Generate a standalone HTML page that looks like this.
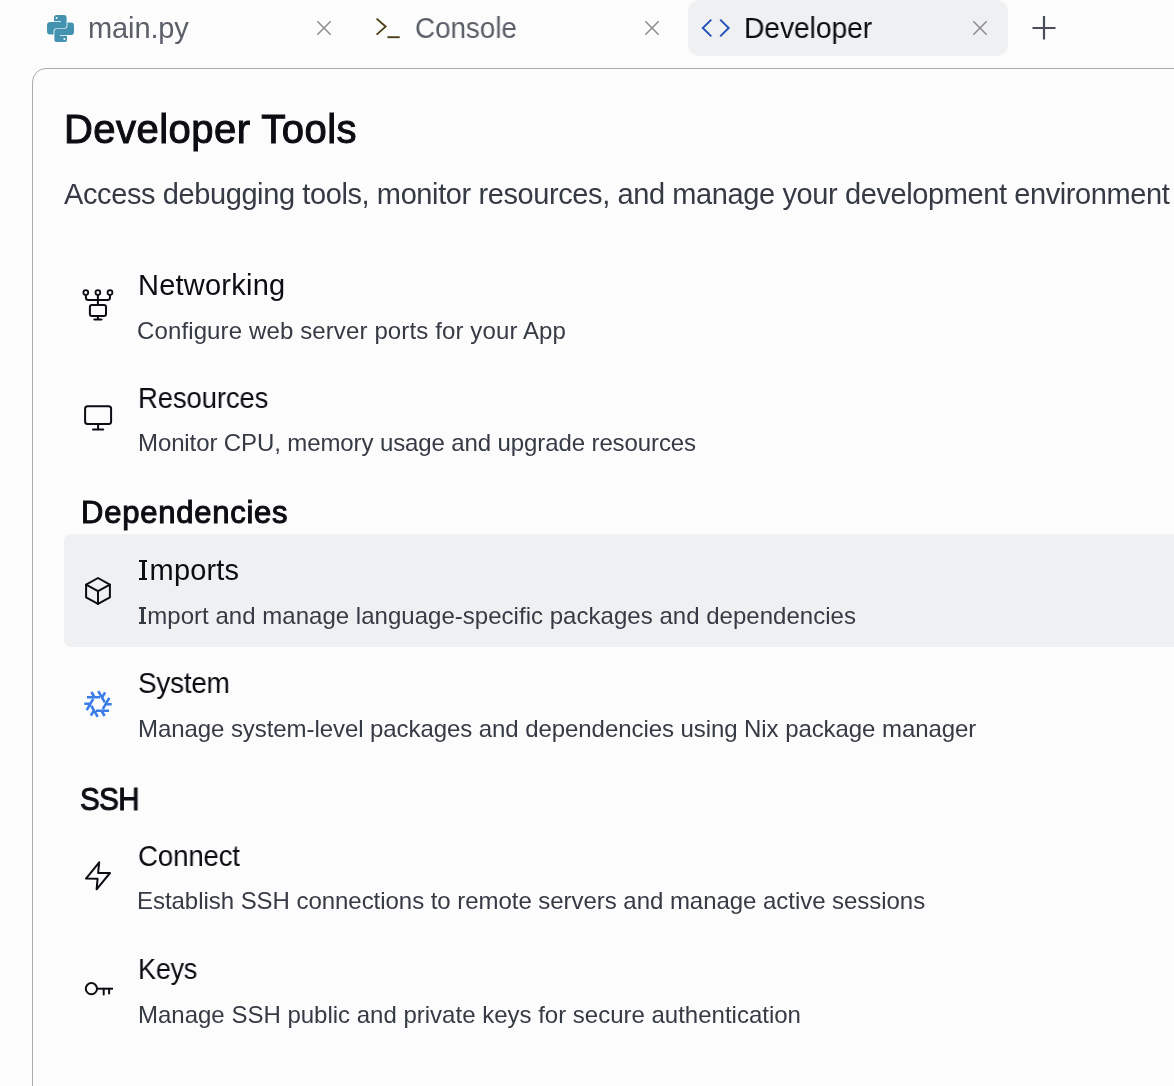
<!DOCTYPE html>
<html><head><meta charset="utf-8"><style>
html,body{margin:0;padding:0;}
body{width:1174px;height:1086px;overflow:hidden;position:relative;background:#fcfcfc;font-family:"Liberation Sans", sans-serif;}
.t{position:absolute;white-space:nowrap;will-change:transform;}
</style></head><body>
<div style="position:absolute;left:688px;top:0px;width:320px;height:56px;background:#eff0f2;border-radius:12px"></div>
<svg style="position:absolute;left:47px;top:15px" width="27" height="27" viewBox="0 0 27 27"><path d="M7,2.6 Q7,0 9.6,0 L17,0 Q19.6,0 19.6,2.6 L19.6,10.6 Q19.6,13.3 16.9,13.3 L9.6,13.3 Q6.6,13.3 6.6,16.3 L6.6,19.6 L3,19.6 Q0,19.6 0,16.3 L0,10.3 Q0,6.9 3.4,6.9 L14,6.9 L14,6.2 L7,6.2 Z" fill="#4393b0"/><path d="M7,2.6 Q7,0 9.6,0 L17,0 Q19.6,0 19.6,2.6 L19.6,10.6 Q19.6,13.3 16.9,13.3 L9.6,13.3 Q6.6,13.3 6.6,16.3 L6.6,19.6 L3,19.6 Q0,19.6 0,16.3 L0,10.3 Q0,6.9 3.4,6.9 L14,6.9 L14,6.2 L7,6.2 Z" fill="#4393b0" transform="rotate(180 13.5 13.5)"/><circle cx="9.6" cy="2.9" r="1" fill="#fcfcfc"/><circle cx="17.4" cy="24.1" r="1" fill="#fcfcfc"/></svg>
<svg style="position:absolute;left:314px;top:18px" width="20" height="20" viewBox="0 0 20 20"><path d="M3.3 3.3 L16.7 16.7 M16.7 3.3 L3.3 16.7" stroke="#8c8c8e" stroke-width="1.5" fill="none"/></svg>
<svg style="position:absolute;left:370px;top:10px" width="36" height="36" viewBox="0 0 36 36"><path d="M6.6 8.6 L15.6 16.6 L6.6 24.6" stroke="#4b3f16" stroke-width="1.9" fill="none"/><path d="M17.4 27.2 L29.7 27.2" stroke="#4b3f16" stroke-width="1.9" fill="none"/></svg>
<svg style="position:absolute;left:642px;top:18px" width="20" height="20" viewBox="0 0 20 20"><path d="M3.3 3.3 L16.7 16.7 M16.7 3.3 L3.3 16.7" stroke="#8c8c8e" stroke-width="1.5" fill="none"/></svg>
<svg style="position:absolute;left:690px;top:10px" width="50" height="36" viewBox="0 0 50 36"><path d="M21.3 9.6 L12.8 18 L21.3 26.4 M30.2 9.6 L38.7 18 L30.2 26.4" stroke="#1f4fb6" stroke-width="1.9" fill="none"/></svg>
<svg style="position:absolute;left:970px;top:18px" width="20" height="20" viewBox="0 0 20 20"><path d="M3.3 3.3 L16.7 16.7 M16.7 3.3 L3.3 16.7" stroke="#8c8c8e" stroke-width="1.5" fill="none"/></svg>
<svg style="position:absolute;left:1030px;top:14px" width="28" height="28" viewBox="0 0 28 28"><path d="M14 2 L14 25.5 M2.5 14 L25.5 14" stroke="#4a4e57" stroke-width="2.2" fill="none"/></svg>
<div style="position:absolute;left:32px;top:68px;width:1300px;height:1200px;border:1px solid #a9abae;border-radius:14px;background:#fcfcfc"></div>
<div style="position:absolute;left:64px;top:534px;width:1200px;height:113px;background:#eff0f2;border-radius:8px"></div>
<svg style="position:absolute;left:0;top:0" width="1174" height="1086" viewBox="0 0 1174 1086">
<g fill="none" stroke="#0b0d12" stroke-width="2" stroke-linejoin="round" stroke-linecap="round">
 <circle cx="85.8" cy="292.6" r="2.4" stroke-width="1.8"/><circle cx="97.9" cy="292.6" r="2.4" stroke-width="1.8"/><circle cx="110" cy="292.6" r="2.4" stroke-width="1.8"/>
 <path d="M85.9 295.2 L85.9 297.6 Q85.9 300.1 88.4 300.1 L107.5 300.1 Q110 300.1 110 297.6 L110 295.2"/>
 <path d="M97.9 295.2 L97.9 304.9"/>
 <rect x="89.9" y="304.9" width="16.1" height="11.1" rx="2"/>
 <path d="M97.9 316 L97.9 319.6 M94.3 319.6 L101.5 319.6"/>
 <rect x="85.1" y="406.3" width="26" height="17.8" rx="2.5"/>
 <path d="M98.1 424.2 L98.1 429.4 M93 429.4 L103.2 429.4"/>
 <path d="M98 578 L109.9 584.7 L109.9 597.4 L98 603.9 L86.1 597.4 L86.1 584.7 Z"/>
 <path d="M86.1 584.7 L98 591.2 L109.9 584.7 M98 591.2 L98 603.9"/>
 <path d="M99.2 862.3 L86 878.6 L97.6 878.7 L96.6 889.3 L110 873 L98.1 873 Z"/>
 <circle cx="91.4" cy="988.7" r="5.6"/>
 <path d="M97 988.7 L113 988.7" stroke-linecap="butt"/><path d="M103.7 988.7 L103.7 994.6 M109.1 988.7 L109.1 993.4"/>
</g>
<g stroke="#3a7de8" stroke-width="2.6" fill="none">
 <g id="lam"><path d="M87 697.3 L100 697.3 M91.4 692 L94.6 697.5"/></g>
 <use href="#lam" transform="rotate(60 98 704)"/>
 <use href="#lam" transform="rotate(120 98 704)"/>
 <use href="#lam" transform="rotate(180 98 704)"/>
 <use href="#lam" transform="rotate(240 98 704)"/>
 <use href="#lam" transform="rotate(300 98 704)"/>
</g>
</svg>
<div id="tab1" class="t" style="left:87.80px;top:9.65px;font-size:29px;line-height:36px;color:#5b5f69;font-weight:400;letter-spacing:-0.117px">main.py</div>
<div id="tab2" class="t" style="left:415.20px;top:9.85px;font-size:29px;line-height:36px;color:#5b5f69;font-weight:400;letter-spacing:-0.033px;transform:scaleX(0.96);transform-origin:0 0">Console</div>
<div id="tab3" class="t" style="left:743.80px;top:9.75px;font-size:29px;line-height:36px;color:#0b0d12;font-weight:400;letter-spacing:-0.088px;transform:scaleX(0.975);transform-origin:0 0">Developer</div>
<div id="title" class="t" style="left:64.00px;top:103.94px;font-size:40px;line-height:50px;color:#0b0d12;font-weight:400;letter-spacing:0.464px;-webkit-text-stroke:1.0px #0b0d12">Developer Tools</div>
<div id="sub" class="t" style="left:63.60px;top:175.65px;font-size:29px;line-height:36px;color:#353a44;font-weight:400;letter-spacing:-0.398px">Access debugging tools, monitor resources, and manage your development environment</div>
<div id="h1" class="t" style="left:137.60px;top:266.55px;font-size:29px;line-height:36px;color:#0b0d12;font-weight:400;letter-spacing:0.233px">Networking</div>
<div id="d1" class="t" style="left:137.40px;top:315.68px;font-size:24px;line-height:30px;color:#353a44;font-weight:400;letter-spacing:0.124px">Configure web server ports for your App</div>
<div id="h2" class="t" style="left:137.60px;top:379.75px;font-size:29px;line-height:36px;color:#0b0d12;font-weight:400;letter-spacing:-0.162px;transform:scaleX(0.95);transform-origin:0 0">Resources</div>
<div id="d2" class="t" style="left:138.00px;top:427.88px;font-size:24px;line-height:30px;color:#353a44;font-weight:400;letter-spacing:-0.107px">Monitor CPU, memory usage and upgrade resources</div>
<div id="sec1" class="t" style="left:81.00px;top:493.36px;font-size:31px;line-height:39px;color:#0b0d12;font-weight:400;letter-spacing:0.764px;-webkit-text-stroke:1.0px #0b0d12">Dependencies</div>
<div id="h3" class="t" style="left:138.20px;top:551.55px;font-size:29px;line-height:36px;color:#0b0d12;font-weight:400;letter-spacing:0.167px"><span style="display:inline-block;position:relative;width:11.6px;height:20px;letter-spacing:0"><i style="position:absolute;left:0.7px;top:0;width:8.8px;height:2.1px;background:currentColor"></i><i style="position:absolute;left:3.60px;top:0;width:3.0px;height:20px;background:currentColor"></i><i style="position:absolute;left:0.7px;top:17.90px;width:8.8px;height:2.1px;background:currentColor"></i></span>mports</div>
<div id="d3" class="t" style="left:138.00px;top:600.88px;font-size:24px;line-height:30px;color:#353a44;font-weight:400;letter-spacing:0.025px"><span style="display:inline-block;position:relative;width:9.3px;height:17px;letter-spacing:0"><i style="position:absolute;left:0.7px;top:0;width:7.3px;height:1.8px;background:currentColor"></i><i style="position:absolute;left:3.10px;top:0;width:2.5px;height:17px;background:currentColor"></i><i style="position:absolute;left:0.7px;top:15.20px;width:7.3px;height:1.8px;background:currentColor"></i></span>mport and manage language-specific packages and dependencies</div>
<div id="h4" class="t" style="left:138.00px;top:664.75px;font-size:29px;line-height:36px;color:#0b0d12;font-weight:400;letter-spacing:-0.300px;transform:scaleX(0.965);transform-origin:0 0">System</div>
<div id="d4" class="t" style="left:138.00px;top:713.88px;font-size:24px;line-height:30px;color:#353a44;font-weight:400;letter-spacing:-0.070px">Manage system-level packages and dependencies using Nix package manager</div>
<div id="sec2" class="t" style="left:79.80px;top:779.76px;font-size:31px;line-height:39px;color:#0b0d12;font-weight:400;letter-spacing:-0.650px;-webkit-text-stroke:1.0px #0b0d12;transform:scaleX(0.955);transform-origin:0 0">SSH</div>
<div id="h5" class="t" style="left:138.00px;top:837.55px;font-size:29px;line-height:36px;color:#0b0d12;font-weight:400;letter-spacing:-0.183px;transform:scaleX(0.955);transform-origin:0 0">Connect</div>
<div id="d5" class="t" style="left:137.00px;top:886.48px;font-size:24px;line-height:30px;color:#353a44;font-weight:400;letter-spacing:-0.042px">Establish SSH connections to remote servers and manage active sessions</div>
<div id="h6" class="t" style="left:138.00px;top:950.55px;font-size:29px;line-height:36px;color:#0b0d12;font-weight:400;letter-spacing:-0.200px;transform:scaleX(0.93);transform-origin:0 0">Keys</div>
<div id="d6" class="t" style="left:138.00px;top:999.58px;font-size:24px;line-height:30px;color:#353a44;font-weight:400;letter-spacing:-0.002px">Manage SSH public and private keys for secure authentication</div>
</body></html>
